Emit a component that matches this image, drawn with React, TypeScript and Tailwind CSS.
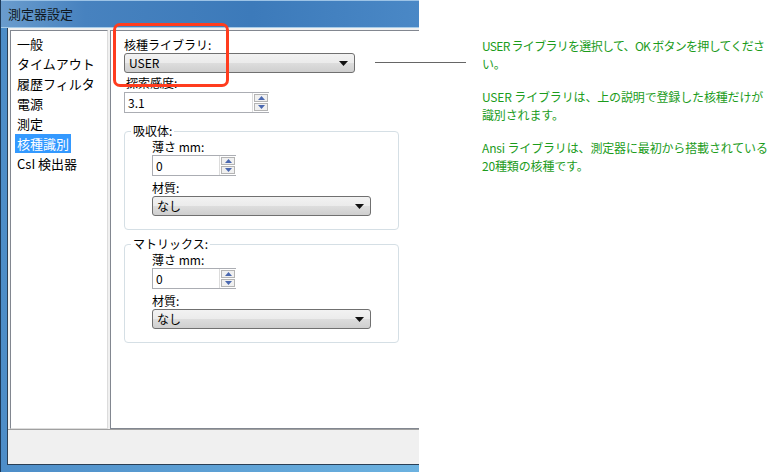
const font = { fontFamily: '"Noto Sans CJK JP", "Liberation Sans", sans-serif' };

const navItems = ['一般', 'タイムアウト', '履歴フィルタ', '電源', '測定', '核種識別', 'CsI 検出器'];

const Arrow = () => (
  <svg width="9" height="5" viewBox="0 0 9 5">
    <path d="M0 0h9L4.5 5z" fill="#111" />
  </svg>
);

const Combo = ({ value, w }: { value: string; w: string }) => (
  <div
    className={`${w} h-[20px] flex items-center justify-between rounded-[3px] border border-[#707070] pl-[4px] pr-[6px] text-[12px] text-black bg-[linear-gradient(#f2f2f2_0%,#ebebeb_50%,#dddddd_51%,#cfcfcf_100%)]`}
  >
    <span>{value}</span>
    <Arrow />
  </div>
);

const Spin = ({ value, w }: { value: string; w: string }) => (
  <div className={`${w} h-[21px] flex border border-[#abadb3] border-r-0 bg-white`}>
    <div className="flex-1 pl-[3px] text-[12px] leading-[19px] text-black">{value}</div>
    <div className="w-[17px] flex flex-col gap-[1px] p-[1px] border-l border-[#dcdcdc]">
      <div className="flex-1 flex items-center justify-center border border-[#b4b4b4] bg-[#f0f0f0]">
        <svg width="7" height="4" viewBox="0 0 7 4">
          <path d="M3.5 0L7 4H0z" fill="#4a68b0" />
        </svg>
      </div>
      <div className="flex-1 flex items-center justify-center border border-[#b4b4b4] bg-[#f0f0f0]">
        <svg width="7" height="4" viewBox="0 0 7 4">
          <path d="M0 0h7L3.5 4z" fill="#4a68b0" />
        </svg>
      </div>
    </div>
  </div>
);

const Group = ({ title }: { title: string }) => (
  <div className="relative w-[275px] h-[99px] rounded-[4px] border border-[#d5dfe5] pl-[27px] pt-[8px]">
    <span className="absolute -top-[9px] left-[6px] bg-white px-[2px] text-[12px] leading-[16px] text-black">
      {title}
    </span>
    <div className="text-[12px] leading-[14px] text-black">薄さ mm:</div>
    <div className="mt-[1px]">
      <Spin value="0" w="w-[84px]" />
    </div>
    <div className="mt-[5px] text-[12px] leading-[14px] text-black">材質:</div>
    <div className="mt-[1px]">
      <Combo value="なし" w="w-[219px]" />
    </div>
  </div>
);

export default function App() {
  return (
    <div className="relative w-[767px] h-[472px] bg-white flex overflow-hidden" style={font}>
      {/* dialog window (cut at the right) */}
      <div className="shrink-0 w-[419px] h-[472px] flex flex-col bg-[#4a88c4] border-l border-[#1c3a5a]">
        <div className="h-[28px] flex items-center pl-[7px] text-[13px] text-[#101820] bg-[linear-gradient(90deg,#6a9ccd_0%,#4782bf_20%,#3c7aba_60%,#4a88c6_100%)] shadow-[inset_0_1px_0_#9cc3e6,inset_0_-1px_0_#a6cbe8]">
          測定器設定
        </div>
        <div className="flex-1 flex flex-col pl-[6px] pb-[7px] bg-[linear-gradient(90deg,#4d8dc8,#6cb2e0)]">
          <div className="flex-1 flex flex-col bg-[#f0f0f0] border-l border-b border-[#2a3f55]">
            <div className="flex-1 flex pt-[2px] pl-[2px]">
              <div className="w-[98px] border border-[#828790] border-r-[#dcdcdc] border-b-[#dcdcdc] bg-white pt-[2px] pl-[4px]">
                {navItems.map((item) => (
                  <div key={item} className="h-[20px] flex items-center">
                    <span
                      className={`px-[2px] text-[13px] leading-[19px] ${
                        item === '核種識別' ? 'bg-[#3399ff] text-white' : 'text-black'
                      }`}
                    >
                      {item}
                    </span>
                  </div>
                ))}
              </div>
              <div className="w-[2px]" />
              <div className="relative flex-1 bg-white border-l border-t border-b border-[#828790] pl-[13px] pt-[7px]">
                <div className="text-[12px] leading-[14px] text-black">核種ライブラリ:</div>
                <div className="mt-[1px]">
                  <Combo value="USER" w="w-[231px]" />
                </div>
                <div className="mt-[2px] text-[12px] leading-[16px] text-black pl-[2px]">探索感度:</div>
                <div className="mt-[1px]">
                  <Spin value="3.1" w="w-[145px]" />
                </div>
                <div className="mt-[18px] flex flex-col gap-[14px]">
                  <Group title="吸収体:" />
                  <Group title="マトリックス:" />
                </div>
                {/* highlight box */}
                <div className="absolute left-[2px] -top-[8px] w-[116px] h-[64px] rounded-[7px] border-[3px] border-[#ff3c1e]" />
              </div>
            </div>
            <div className="h-[35px] border-t border-[#a0a0a0]" />
          </div>
        </div>
      </div>

      {/* connector line */}
      <div className="absolute left-[375px] top-[62px] w-[91px] h-[1px] bg-[#666666]" />

      {/* annotation */}
      <div className="shrink-0 pl-[63px] pt-[37px] text-[12px] leading-[18px] tracking-[-0.15px] text-[#1c9c1c] whitespace-nowrap">
        <p className="tracking-[-0.7px]">USER ライブラリを選択して、OK ボタンを押してくださ</p>
        <p>い。</p>
        <p className="mt-[15px]">USER ライブラリは、上の説明で登録した核種だけが</p>
        <p>識別されます。</p>
        <p className="mt-[15px]">Ansi ライブラリは、測定器に最初から搭載されている</p>
        <p>20種類の核種です。</p>
      </div>
    </div>
  );
}
